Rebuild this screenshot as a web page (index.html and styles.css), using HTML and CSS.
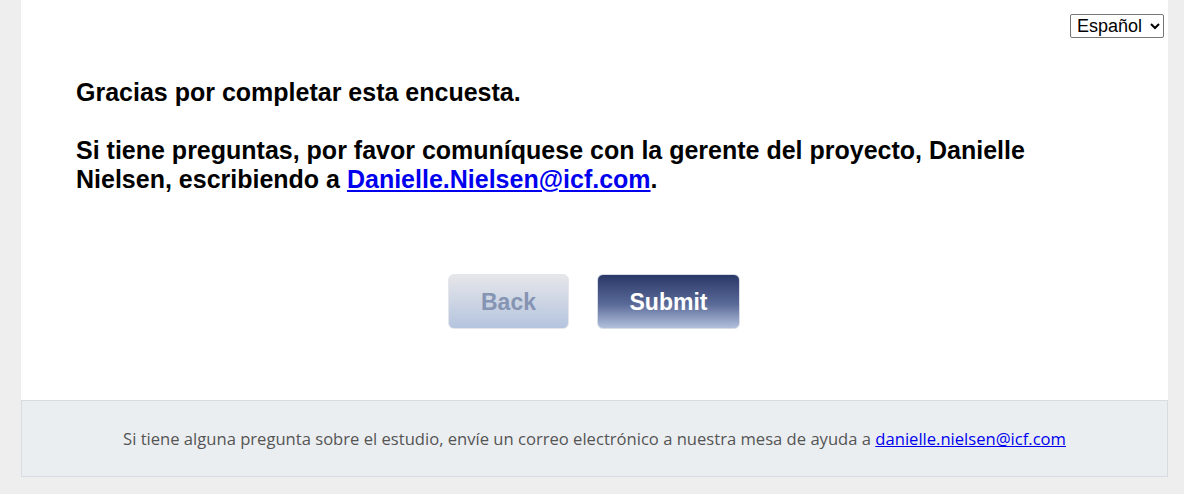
FILE: index.html
```html
<!DOCTYPE html>
<html lang="es">
<head>
    <meta charset="UTF-8">
    <meta name="viewport" content="width=device-width, initial-scale=1.0">
    <title>Encuesta</title>
    <link rel="stylesheet" href="styles.css">
</head>
<body>
    <div class="page">
        <div class="survey">
            <div class="lang-bar">
                <select class="lang-select">
                    <option>Español</option>
                    <option>English</option>
                </select>
            </div>
            <div class="message">
                <p>Gracias por completar esta encuesta.</p>
                <p>Si tiene preguntas, por favor comuníquese con la gerente del proyecto, Danielle Nielsen, escribiendo a <a href="mailto:Danielle.Nielsen@icf.com">Danielle.Nielsen@icf.com</a>.</p>
            </div>
            <div class="nav-buttons">
                <button type="button" class="btn btn-back" disabled>Back</button>
                <button type="button" class="btn btn-submit">Submit</button>
            </div>
        </div>
        <div class="footer">
            <p>Si tiene alguna pregunta sobre el estudio, envíe un correo electrónico a nuestra mesa de ayuda a <a href="mailto:danielle.nielsen@icf.com">danielle.nielsen@icf.com</a></p>
        </div>
    </div>
</body>
</html>
```

FILE: styles.css
```css
body {
    margin: 0;
    background-color: #EEEEEE;
    font-family: 'Liberation Sans', Arial, sans-serif;
    color: #000000;
}

.page {
    margin: 0 16px 0 21px;
}

.survey {
    background-color: #FFFFFF;
    padding: 14px 4px 71px 55px;
}

.lang-bar {
    display: flex;
    justify-content: flex-end;
}

.lang-select {
    font-family: 'Liberation Sans', Arial, sans-serif;
    font-size: 18px;
    height: 24px;
    padding: 0 4px 0 2px;
    border: 1px solid #767676;
    border-radius: 2px;
    background-color: #FFFFFF;
    color: #000000;
}

.message {
    padding-right: 51px;
    margin-top: 40px;
    font-size: 25px;
    font-weight: bold;
    line-height: 29px;
}

.message p {
    margin: 0 0 29px 0;
}

.message a {
    color: #0000EE;
}

.nav-buttons {
    display: flex;
    justify-content: center;
    gap: 28px;
    margin-top: 80px;
    margin-left: -52px;
}

.btn {
    height: 55px;
    border-radius: 6px;
    font-family: 'Liberation Sans', Arial, sans-serif;
    font-size: 23px;
    font-weight: bold;
    padding-top: 2px;
    cursor: pointer;
}

.btn-back {
    width: 121px;
    border: 1px solid #E4E6EC;
    background: linear-gradient(to bottom, #E6E6EA, #B4C4DE);
    color: #8594B3;
}

.btn-submit {
    width: 143px;
    border: 1px solid #D8DCE6;
    background: linear-gradient(to bottom, #2A3868, #5A6A98 55%, #B2C0DC);
    color: #FFFFFF;
}

.footer {
    background-color: #EBEEF1;
    border: 1px solid #D6DCE2;
    height: 75px;
    display: flex;
    align-items: center;
    justify-content: center;
    font-family: 'Open Sans', sans-serif;
    font-size: 16.6px;
    color: #555555;
}

.footer p {
    margin: 0;
    text-align: center;
}

.footer a {
    color: #0000EE;
}
```
